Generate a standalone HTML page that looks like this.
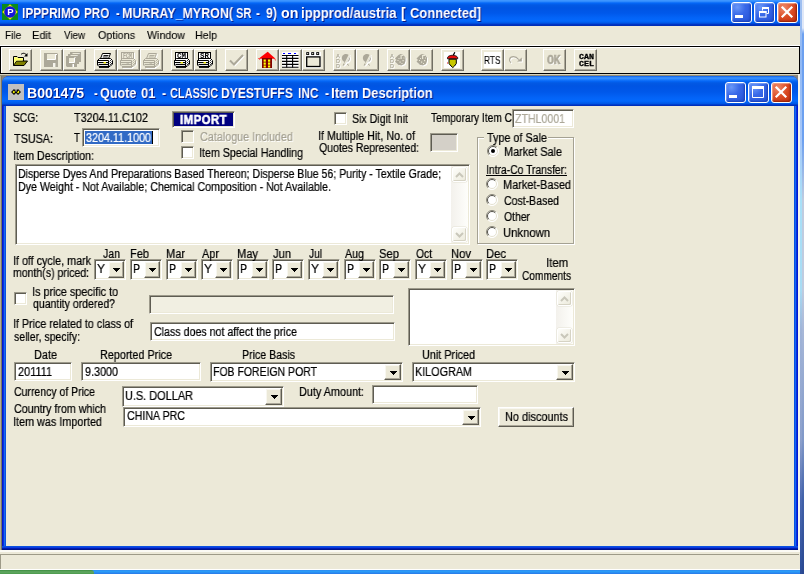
<!DOCTYPE html><html><head><meta charset="utf-8"><title>IPPPRIMO PRO</title><style>
html,body{margin:0;padding:0}
body{width:804px;height:574px;overflow:hidden;background:#ECE9D8;position:relative;font-family:"Liberation Sans",sans-serif;}
.a{position:absolute;box-sizing:content-box}
.t{will-change:transform;-webkit-text-stroke:0.22px currentColor;position:absolute;white-space:nowrap;transform-origin:0 0;color:#000;font-size:12.5px}
.mono{font-family:"Liberation Mono",monospace}
.sk{border:1px solid;border-color:#9D9A8B #fff #fff #9D9A8B;box-shadow:inset 1px 1px 0 #5E5C52, inset -1px -1px 0 #ECE9D8}
.rb{border:1px solid;border-color:#fff #5E5C52 #5E5C52 #fff;background:#ECE9D8;box-shadow:inset -1px -1px 0 #ACA899, inset 1px 1px 0 #F8F7F0}
.tb{width:21px;height:20px;border:1px solid;border-color:#fff #716F64 #716F64 #fff;background:#ECE9D8;box-shadow:inset -1px -1px 0 #ACA899}
.rd{width:12px;height:12px;border-radius:6px;background:#fff;box-shadow:inset 1px 1px 0 0.5px #8A887B, inset 2px 2px 1px #55534A, 0.5px 0.5px 0 0.5px #fff}
.sbb{border:1px solid #fff;border-radius:2px;background:linear-gradient(135deg,#FDFDFA,#ECEADB);box-shadow:inset -1px -1px 0 #D6D3C4, 0 0 0 0.5px #E4E1D3}
.cb{width:19px;height:19px;border:1px solid #fff;border-radius:3px;background:radial-gradient(circle at 28% 22%,#6A98F8 0%,#3868E8 40%,#2450D4 100%);box-shadow:inset -1px -1px 2px #1840B8, inset 1px 1px 1px #7FA4F8}
.cb.red{background:radial-gradient(circle at 30% 25%,#EE8A6A 0%,#DA4A22 50%,#C03010 100%);box-shadow:inset -1px -1px 2px #902008, inset 1px 1px 1px #F4A890}
</style></head><body>
<div class="a" style="left:800px;top:0;width:2px;height:574px;background:linear-gradient(180deg,#A0C0F0 0px,#90B8F4 60px,#A8C8F8 140px,#A8E0F8 200px,#A8DCF4 290px,#A0B4D8 330px,#8CA0CC 440px,#4A68B0 500px,#2A4C98 574px)"></div>
<div class="a" style="left:802px;top:0;width:2px;height:574px;background:linear-gradient(180deg,#E0E8F8 0px,#E0E8F8 28px,#6CA0F0 34px,#6CA0F0 140px,#C0CCE0 200px,#C0CCE0 290px,#A8B8D8 330px,#8098C8 440px,#4060A8 500px,#2A4890 574px)"></div>
<div class="a" style="left:0;top:0;width:800px;height:26px;background:linear-gradient(180deg,#3D95FF 0px,#3D95FF 1px,#0568F8 3px,#0259E4 5px,#0054E3 8px,#0058EA 13px,#0364F8 18px,#0368FC 21px,#0058E6 23px,#0034C4 24.5px,#002CB0 26px)"></div>
<svg class="a" style="left:2px;top:4px;will-change:transform" width="16" height="16"><rect width="16" height="16" fill="#0A8A1E"/><path d="M8 0.300L15.700 8L8 15.700L0.300 8Z" fill="#F4E800"/><circle cx="8" cy="8" r="5.800" fill="#1414DC"/><text x="8.300" y="11.300" font-size="9.500" font-weight="bold" font-family="Liberation Sans,sans-serif" text-anchor="middle" fill="#fff">P</text></svg>
<div class="a cb" style="left:731px;top:2px"><svg class="a" style="left:-1px;top:-1px" width="21" height="21"><rect x="4" y="13" width="8" height="3" fill="#fff"/></svg></div><div class="a cb" style="left:754px;top:2px"><svg class="a" style="left:-1px;top:-1px" width="21" height="21"><path d="M8.500 8.500V5.500H14.500V11.500H12.500" fill="none" stroke="#fff"/><path d="M8 6H15" stroke="#fff" stroke-width="2"/><rect x="5.500" y="9.500" width="6.500" height="5.500" fill="none" stroke="#fff"/><path d="M5 10H12.500" stroke="#fff" stroke-width="2"/></svg></div><div class="a cb red" style="left:777px;top:2px"><svg class="a" style="left:-1px;top:-1px" width="21" height="21"><path d="M5.500 5.500L14.500 14.500M14.500 5.500L5.500 14.500" stroke="#fff" stroke-width="2.200" stroke-linecap="square"/></svg></div>
<div class="a" style="left:0;top:26px;width:800px;height:19px;background:#ECE9D8"></div>
<div class="a" style="left:0;top:45px;width:800px;height:1px;background:#fff"></div>
<div class="a" style="left:0;top:46px;width:798px;height:26px;border:1px solid #000;background:#ECE9D8;box-shadow:inset 1px 1px 0 #fff"></div>
<div class="a tb" style="left:9px;top:49px"></div>
<div class="a tb" style="left:40px;top:49px"></div>
<div class="a tb" style="left:63px;top:49px"></div>
<div class="a tb" style="left:94px;top:49px"></div>
<div class="a tb" style="left:117px;top:49px"></div>
<div class="a tb" style="left:140px;top:49px"></div>
<div class="a tb" style="left:171px;top:49px"></div>
<div class="a tb" style="left:194px;top:49px"></div>
<div class="a tb" style="left:225px;top:49px"></div>
<div class="a tb" style="left:256px;top:49px"></div>
<div class="a tb" style="left:279px;top:49px"></div>
<div class="a tb" style="left:302px;top:49px"></div>
<div class="a tb" style="left:333px;top:49px"></div>
<div class="a tb" style="left:356px;top:49px"></div>
<div class="a tb" style="left:387px;top:49px"></div>
<div class="a tb" style="left:410px;top:49px"></div>
<div class="a tb" style="left:441px;top:49px"></div>
<div class="a tb" style="left:481px;top:49px"></div>
<div class="a tb" style="left:504px;top:49px"></div>
<div class="a tb" style="left:543px;top:49px"></div>
<div class="a tb" style="left:574px;top:49px"></div>
<svg class="a" style="left:13px;top:52px;overflow:visible;will-change:transform" width="18" height="18"><path d="M0.500 13.500V4.500H4L5 5.500H10.500V9" fill="#FFFF9A" stroke="#000"/><path d="M0.500 13.500L3.500 9H14.500L11 13.500Z" fill="#808000" stroke="#000"/><path d="M1.500 12V5.500H3.500L4.500 6.500H9.500V8.500H3Z" fill="#FFFF66"/><path d="M8 2.500C9.500 0.800 12 0.800 13.500 3" fill="none" stroke="#000"/><path d="M14.500 1V4.500H11Z" fill="#000"/></svg>
<svg class="a" style="left:44px;top:52px;overflow:visible;will-change:transform" width="18" height="18"><path d="M0 1H13L14 2V15H0Z" fill="#ACA899"/><rect x="3" y="2" width="8" height="5.500" fill="#ECE9D8"/><path d="M3 7.500H11.500V2" fill="none" stroke="#fff"/><rect x="9" y="11" width="2.400" height="4" fill="#F6F4EC"/><rect x="12" y="2" width="1" height="1" fill="#fff"/></svg>
<svg class="a" style="left:66px;top:52px;overflow:visible;will-change:transform" width="18" height="18"><path d="M4 0H15V10H13V12H11V15H1L0 14V4H2V2H4Z" fill="#ACA899"/><rect x="3" y="6" width="5" height="4" fill="#ECE9D8"/><path d="M3 10.500H8.500V6" fill="none" stroke="#fff"/><path d="M6.500 1.500H12.500M4.500 3.500H10.500" stroke="#ECE9D8"/><rect x="12.500" y="1" width="1" height="1" fill="#fff"/><rect x="10.500" y="3" width="1" height="1" fill="#fff"/><rect x="8.500" y="5" width="1" height="1" fill="#fff"/><rect x="6.500" y="12" width="1.500" height="3" fill="#fff"/></svg>
<svg class="a" style="left:97px;top:52px;overflow:visible;will-change:transform" width="18" height="18"><path d="M3.500 6.500L5.500 1.500H13.500L11.500 6.500Z" fill="#fff" stroke="#000"/><path d="M6.500 3.500H11.500M5.800 5H10.800" stroke="#000" stroke-width="0.900"/><path d="M0.500 8.500L2.500 6.500H13.500L15.500 8.500V12L13 14.500H2L0.500 13Z" fill="#fff" stroke="#000"/><path d="M1 10.500H11.500" stroke="#000" stroke-width="1"/><path d="M1.500 12.500H11.500" stroke="#000" stroke-width="1.200"/><path d="M11.500 8.500V14M11.500 8.500H0.500" stroke="#000" fill="none"/><path d="M12.500 9.500L14.500 7.500M12.500 11.500L14.500 9.500M12.500 13.500L15 11" stroke="#000" stroke-width="0.800"/><rect x="6.500" y="10" width="2.500" height="1.500" fill="#E8E000"/><path d="M2 15.200H12" stroke="#000" stroke-width="1.400"/></svg>
<svg class="a" style="left:120px;top:52px;overflow:visible;will-change:transform" width="18" height="18"><g transform="translate(1,1)"><rect x="1.500" y="0.500" width="12" height="6.500" fill="none" stroke="#fff"/><text x="7.500" y="6" font-size="6.500" font-weight="bold" font-family="Liberation Mono,monospace" text-anchor="middle" fill="#fff" textLength="9" lengthAdjust="spacingAndGlyphs">FCM</text><path d="M0.500 8.500L2.500 6.500H13.500L15.500 8.500V12L13 14.500H2L0.500 13Z" fill="none" stroke="#fff"/><path d="M1 10.500H11.500" stroke="#fff" stroke-width="1"/><path d="M1.500 12.500H11.500" stroke="#fff" stroke-width="1.200"/><path d="M11.500 8.500V14M11.500 8.500H0.500" stroke="#fff" fill="none"/><path d="M12.500 9.500L14.500 7.500M12.500 11.500L14.500 9.500M12.500 13.500L15 11" stroke="#fff" stroke-width="0.800"/><rect x="6.500" y="10" width="2.500" height="1.500" fill="none"/><path d="M2 15.200H12" stroke="#fff" stroke-width="1.400"/></g><rect x="1.500" y="0.500" width="12" height="6.500" fill="#ECE9D8" stroke="#ACA899"/><text x="7.500" y="6" font-size="6.500" font-weight="bold" font-family="Liberation Mono,monospace" text-anchor="middle" fill="#ACA899" textLength="9" lengthAdjust="spacingAndGlyphs">FCM</text><path d="M0.500 8.500L2.500 6.500H13.500L15.500 8.500V12L13 14.500H2L0.500 13Z" fill="#ECE9D8" stroke="#ACA899"/><path d="M1 10.500H11.500" stroke="#ACA899" stroke-width="1"/><path d="M1.500 12.500H11.500" stroke="#ACA899" stroke-width="1.200"/><path d="M11.500 8.500V14M11.500 8.500H0.500" stroke="#ACA899" fill="none"/><path d="M12.500 9.500L14.500 7.500M12.500 11.500L14.500 9.500M12.500 13.500L15 11" stroke="#ACA899" stroke-width="0.800"/><rect x="6.500" y="10" width="2.500" height="1.500" fill="#ACA899"/><path d="M2 15.200H12" stroke="#ACA899" stroke-width="1.400"/></svg>
<svg class="a" style="left:143px;top:52px;overflow:visible;will-change:transform" width="18" height="18"><g transform="translate(1,1)"><path d="M3.500 6.500L5.500 1.500H13.500L11.500 6.500Z" fill="none" stroke="#fff"/><path d="M6.500 3.500H11.500M5.800 5H10.800" stroke="#fff" stroke-width="0.900"/><path d="M0.500 8.500L2.500 6.500H13.500L15.500 8.500V12L13 14.500H2L0.500 13Z" fill="none" stroke="#fff"/><path d="M1 10.500H11.500" stroke="#fff" stroke-width="1"/><path d="M1.500 12.500H11.500" stroke="#fff" stroke-width="1.200"/><path d="M11.500 8.500V14M11.500 8.500H0.500" stroke="#fff" fill="none"/><path d="M12.500 9.500L14.500 7.500M12.500 11.500L14.500 9.500M12.500 13.500L15 11" stroke="#fff" stroke-width="0.800"/><rect x="6.500" y="10" width="2.500" height="1.500" fill="none"/><path d="M2 15.200H12" stroke="#fff" stroke-width="1.400"/></g><path d="M3.500 6.500L5.500 1.500H13.500L11.500 6.500Z" fill="#ECE9D8" stroke="#ACA899"/><path d="M6.500 3.500H11.500M5.800 5H10.800" stroke="#ACA899" stroke-width="0.900"/><path d="M0.500 8.500L2.500 6.500H13.500L15.500 8.500V12L13 14.500H2L0.500 13Z" fill="#ECE9D8" stroke="#ACA899"/><path d="M1 10.500H11.500" stroke="#ACA899" stroke-width="1"/><path d="M1.500 12.500H11.500" stroke="#ACA899" stroke-width="1.200"/><path d="M11.500 8.500V14M11.500 8.500H0.500" stroke="#ACA899" fill="none"/><path d="M12.500 9.500L14.500 7.500M12.500 11.500L14.500 9.500M12.500 13.500L15 11" stroke="#ACA899" stroke-width="0.800"/><rect x="6.500" y="10" width="2.500" height="1.500" fill="#ACA899"/><path d="M2 15.200H12" stroke="#ACA899" stroke-width="1.400"/></svg>
<svg class="a" style="left:174px;top:52px;overflow:visible;will-change:transform" width="18" height="18"><rect x="1.500" y="0.500" width="12" height="6.500" fill="#fff" stroke="#000"/><text x="7.500" y="6" font-size="6.500" font-weight="bold" font-family="Liberation Mono,monospace" text-anchor="middle" fill="#000" textLength="9" lengthAdjust="spacingAndGlyphs">CM</text><path d="M0.500 8.500L2.500 6.500H13.500L15.500 8.500V12L13 14.500H2L0.500 13Z" fill="#fff" stroke="#000"/><path d="M1 10.500H11.500" stroke="#000" stroke-width="1"/><path d="M1.500 12.500H11.500" stroke="#000" stroke-width="1.200"/><path d="M11.500 8.500V14M11.500 8.500H0.500" stroke="#000" fill="none"/><path d="M12.500 9.500L14.500 7.500M12.500 11.500L14.500 9.500M12.500 13.500L15 11" stroke="#000" stroke-width="0.800"/><rect x="6.500" y="10" width="2.500" height="1.500" fill="#E8E000"/><path d="M2 15.200H12" stroke="#000" stroke-width="1.400"/></svg>
<svg class="a" style="left:197px;top:52px;overflow:visible;will-change:transform" width="18" height="18"><rect x="1.500" y="0.500" width="12" height="6.500" fill="#fff" stroke="#000"/><text x="7.500" y="6" font-size="6.500" font-weight="bold" font-family="Liberation Mono,monospace" text-anchor="middle" fill="#000" textLength="9" lengthAdjust="spacingAndGlyphs">SR</text><path d="M0.500 8.500L2.500 6.500H13.500L15.500 8.500V12L13 14.500H2L0.500 13Z" fill="#fff" stroke="#000"/><path d="M1 10.500H11.500" stroke="#000" stroke-width="1"/><path d="M1.500 12.500H11.500" stroke="#000" stroke-width="1.200"/><path d="M11.500 8.500V14M11.500 8.500H0.500" stroke="#000" fill="none"/><path d="M12.500 9.500L14.500 7.500M12.500 11.500L14.500 9.500M12.500 13.500L15 11" stroke="#000" stroke-width="0.800"/><rect x="6.500" y="10" width="2.500" height="1.500" fill="#E8E000"/><path d="M2 15.200H12" stroke="#000" stroke-width="1.400"/></svg>
<svg class="a" style="left:229px;top:52px;overflow:visible;will-change:transform" width="18" height="18"><path d="M2 9.500L6 13.500L15 4" fill="none" stroke="#fff" stroke-width="1.800"/><path d="M1 8.500L5 12.500L14 3" fill="none" stroke="#ACA899" stroke-width="2"/></svg>
<svg class="a" style="left:260px;top:52px;overflow:visible;will-change:transform" width="18" height="18"><path d="M7.700 -0.300L-1.500 6.800H15.500Z" fill="#FF0000"/><path d="M-1.500 6.500L-0.500 7.500M14.500 7L15.800 8.200" stroke="#FF0000" stroke-width="1"/><rect x="2" y="6" width="10" height="10" fill="#800000"/><g fill="#FFFF00"><rect x="3.600" y="7.500" width="2.200" height="2.200"/><rect x="8" y="7.500" width="2.200" height="2.200"/><rect x="3.600" y="10.500" width="2.200" height="2.200"/><rect x="8" y="10.500" width="2.200" height="2.200"/><rect x="3.600" y="13.500" width="2.200" height="2"/><rect x="8" y="13.500" width="2.200" height="2"/></g></svg>
<svg class="a" style="left:283px;top:52px;overflow:visible;will-change:transform" width="18" height="18"><rect x="-1" y="0" width="16.500" height="16" fill="#fff"/><path d="M0 1.500H2M5 1.500H8M11 1.500H13" stroke="#0000FF" stroke-width="1.200"/><path d="M-1 3.500H15.500M-1 6.400H15.500M-1 9.400H15.500M-1 12.400H15.500M-1 15.300H15.500" stroke="#000" stroke-width="1.100"/><path d="M3.700 3.500V15.500M9.600 3.500V15.500" stroke="#000" stroke-width="1.100"/></svg>
<svg class="a" style="left:306px;top:52px;overflow:visible;will-change:transform" width="18" height="18"><rect x="-0.500" y="0" width="15.500" height="16" fill="#fff"/><g fill="#ECE9D8" stroke="#000" stroke-width="0.900"><rect x="0.700" y="0.600" width="2" height="2"/><rect x="5.700" y="0.600" width="2" height="2"/><rect x="10.700" y="0.600" width="2" height="2"/></g><rect x="0.700" y="4.900" width="13.300" height="9.600" fill="#ECE9D8" stroke="#000" stroke-width="1.300"/></svg>
<svg class="a" style="left:336px;top:52px;overflow:visible;will-change:transform" width="18" height="18"><g transform="translate(1,1)"><text font-size="5.500" font-weight="bold" font-family="Liberation Sans,sans-serif" fill="#fff"><tspan x="0" y="5.500">A</tspan><tspan x="0" y="10.500">D</tspan><tspan x="0" y="15.500">D</tspan></text><path d="M10 2C7 2 5.5 4.500 6 7C6.3 8.500 7.5 9.500 8.5 10L6.5 13.500H8L10.5 10.500C13 10 14.5 7.500 14 5C13.5 3 12 2 10 2Z" fill="#fff"/></g><text font-size="5.500" font-weight="bold" font-family="Liberation Sans,sans-serif" fill="#ACA899"><tspan x="0" y="5.500">A</tspan><tspan x="0" y="10.500">D</tspan><tspan x="0" y="15.500">D</tspan></text><path d="M10 2C7 2 5.5 4.500 6 7C6.3 8.500 7.5 9.500 8.5 10L6.5 13.500H8L10.5 10.500C13 10 14.5 7.500 14 5C13.5 3 12 2 10 2Z" fill="#ACA899"/><path d="M13.5 2.500L8.5 12.500" stroke="#ECE9D8" stroke-width="1.400"/><path d="M14.5 3L9.5 13" stroke="#fff" stroke-width="0.800"/><path d="M11 12L13 13.500" stroke="#ACA899" stroke-width="1"/></svg>
<svg class="a" style="left:359px;top:52px;overflow:visible;will-change:transform" width="18" height="18"><g transform="translate(1,1)"><path d="M8 2C5 2 3.5 4.500 4 7C4.3 8.500 5.5 9.500 6.5 10L4.5 13.500H6L8.5 10.500C11 10 12.5 7.500 12 5C11.5 3 10 2 8 2Z" fill="#fff"/></g><path d="M8 2C5 2 3.5 4.500 4 7C4.3 8.500 5.5 9.500 6.5 10L4.5 13.500H6L8.5 10.500C11 10 12.5 7.500 12 5C11.5 3 10 2 8 2Z" fill="#ACA899"/><path d="M11.5 2.500L6.5 12.500" stroke="#ECE9D8" stroke-width="1.400"/><path d="M12.5 3L7.5 13" stroke="#fff" stroke-width="0.800"/><path d="M9 12L11 13.500" stroke="#ACA899" stroke-width="1"/></svg>
<svg class="a" style="left:390px;top:52px;overflow:visible;will-change:transform" width="18" height="18"><g transform="translate(1,1)"><text font-size="5.500" font-weight="bold" font-family="Liberation Sans,sans-serif" fill="#fff"><tspan x="0" y="5.500">A</tspan><tspan x="0" y="10.500">D</tspan><tspan x="0" y="15.500">D</tspan></text><path d="M10.5 2L13.5 3L15.5 5.500V9L14.5 12L11.5 13.500L8.5 13L6.5 11L5.0 9.500L6.5 8L5.0 6.500L7.0 4.500L8.5 3Z" fill="#fff"/></g><text font-size="5.500" font-weight="bold" font-family="Liberation Sans,sans-serif" fill="#ACA899"><tspan x="0" y="5.500">A</tspan><tspan x="0" y="10.500">D</tspan><tspan x="0" y="15.500">D</tspan></text><path d="M10.5 2L13.5 3L15.5 5.500V9L14.5 12L11.5 13.500L8.5 13L6.5 11L5.0 9.500L6.5 8L5.0 6.500L7.0 4.500L8.5 3Z" fill="#ACA899"/><g fill="#ECE9D8"><rect x="10.5" y="3" width="1.200" height="4"/><rect x="11.5" y="3" width="2" height="1"/><rect x="8.5" y="6" width="1" height="1"/><rect x="12.5" y="8" width="1.200" height="1.200"/><rect x="9.5" y="9.500" width="1.200" height="1.200"/><rect x="11.5" y="11" width="1" height="1"/><rect x="7.5" y="8" width="1" height="1"/><rect x="13.5" y="5.500" width="1" height="1"/></g></svg>
<svg class="a" style="left:414px;top:52px;overflow:visible;will-change:transform" width="18" height="18"><g transform="translate(1,1)"><path d="M8 2L11 3L13 5.500V9L12 12L9 13.500L6 13L4 11L2.5 9.500L4 8L2.5 6.500L4.5 4.500L6 3Z" fill="#fff"/></g><path d="M8 2L11 3L13 5.500V9L12 12L9 13.500L6 13L4 11L2.5 9.500L4 8L2.5 6.500L4.5 4.500L6 3Z" fill="#ACA899"/><g fill="#ECE9D8"><rect x="8" y="3" width="1.200" height="4"/><rect x="9" y="3" width="2" height="1"/><rect x="6" y="6" width="1" height="1"/><rect x="10" y="8" width="1.200" height="1.200"/><rect x="7" y="9.500" width="1.200" height="1.200"/><rect x="9" y="11" width="1" height="1"/><rect x="5" y="8" width="1" height="1"/><rect x="11" y="5.500" width="1" height="1"/></g></svg>
<svg class="a" style="left:445px;top:52px;overflow:visible;will-change:transform" width="18" height="18"><rect x="-1" y="0" width="16" height="16" fill="#fff"/><path d="M9.800 0.300L8.300 3.200" stroke="#000" stroke-width="1.300"/><path d="M2.500 6.800C2 4.500 4.500 3.300 7.500 3.300C10.500 3.300 13.200 4.500 12.700 6.800Z" fill="#E81010" stroke="#000" stroke-width="0.800"/><path d="M4 7.200H11.300V11.500L9.500 14L7.800 15.600L6 14L4 11.500Z" fill="#C8C800" stroke="#000" stroke-width="1"/><rect x="2" y="10.500" width="1" height="1" fill="#E81010"/></svg>
<div class="a" style="left:484px;top:52px;width:16.500px;height:16px;background:#fff"></div><span class="t" style="left:484.300px;top:54.300px;font-size:10.800px;line-height:12px;transform:scaleX(0.77);-webkit-text-stroke:0.15px #000">RTS</span>
<svg class="a" style="left:508px;top:52px;overflow:visible;will-change:transform" width="18" height="18"><g transform="translate(1,1)"><path d="M3 10.800C0.500 9 1 4.600 5.500 4.600C8 4.600 9.500 6 10.800 7.600" fill="none" stroke="#fff" stroke-width="1.100"/><path d="M9 9.500L13.800 5.400V9.500Z" fill="#fff"/></g><path d="M3 10.800C0.500 9 1 4.600 5.500 4.600C8 4.600 9.500 6 10.800 7.600" fill="none" stroke="#ACA899" stroke-width="1.100"/><path d="M9 9.500L13.800 5.400V9.500Z" fill="#ACA899"/></svg>
<span class="t mono" style="left:547px;top:52.500px;font-size:13.500px;line-height:15px;font-weight:bold;color:#ACA899;transform:scaleX(0.86);text-shadow:1px 1px 0 #fff;letter-spacing:-0.5px;-webkit-text-stroke:0.4px #ACA899">OK</span>
<span class="t mono" style="left:578.500px;top:53.500px;font-size:7.800px;line-height:7px;font-weight:bold;white-space:pre;transform:scaleX(1.07);-webkit-text-stroke:0.3px #000">CAN
CEL</span>
<div class="a" style="left:0;top:74px;width:800px;height:1px;background:#D6D2BE"></div>
<div class="a" style="left:0;top:75px;width:800px;height:1px;background:#8E8A76"></div>
<div class="a" style="left:0;top:76px;width:1px;height:474px;background:#B0AC98"></div>
<div class="a" style="left:1px;top:76px;width:1px;height:474px;background:#7C7660"></div>
<div class="a" style="left:2px;top:76px;width:8px;height:8px;background:#808080"></div>
<div class="a" style="left:790px;top:76px;width:8px;height:8px;background:#808080"></div>
<div class="a" style="left:798px;top:74px;width:2px;height:476px;background:#F6F4EA"></div>
<div class="a" style="left:2px;top:76px;width:796px;height:474px;border-radius:7px 7px 0 0;background:#0831D9"></div>
<div class="a" style="left:2px;top:100px;width:4px;height:450px;background:linear-gradient(90deg,#0019CF 0,#0019CF 1px,#0A2FE0 1px,#0A2FE0 2px,#166AEE 2px,#166AEE 3px,#0A50E0 3px)"></div>
<div class="a" style="left:794px;top:100px;width:4px;height:450px;background:linear-gradient(90deg,#0A50E0 0,#0A50E0 1px,#1468F0 1px,#1468F0 2px,#0A2FE0 2px,#0A2FE0 3px,#0019CF 3px)"></div>
<div class="a" style="left:2px;top:546px;width:796px;height:4px;background:linear-gradient(180deg,#0A50E0 0,#0A50E0 1px,#0A3CE0 1px,#0A3CE0 2px,#001CB4 2px,#001CB4 3px,#00138C 3px)"></div>
<div class="a" style="left:2px;top:76px;width:796px;height:30px;border-radius:7px 7px 0 0;background:linear-gradient(180deg,#0A5FEA 0px,#3D95FF 2px,#0568F8 5px,#0259E4 7px,#0054E3 10px,#0058EA 16px,#0364F8 22px,#0368FC 25px,#0058E6 27.5px,#0034C4 29px,#002CB0 30px)"></div>
<div class="a" style="left:6px;top:106px;width:788px;height:440px;background:#ECE9D8"></div>
<svg class="a" style="left:8px;top:84px" width="16" height="16"><rect width="16" height="16" fill="#C0C0C0"/><path d="M3 8L6 5L8 7L10 5L13 8L10 11L8 9L6 11Z" fill="#000"/><path d="M4.500 8L6 6.500L7 8L6 9.500ZM9 8.500L10.500 6.500L11.500 8L10 9.500Z" fill="#FFFF00"/><rect x="7.500" y="5" width="1" height="3" fill="#808080"/></svg>
<div class="a cb" style="left:725px;top:82px"><svg class="a" style="left:-1px;top:-1px" width="21" height="21"><rect x="4" y="13" width="8" height="3" fill="#fff"/></svg></div><div class="a cb" style="left:748px;top:82px"><svg class="a" style="left:-1px;top:-1px" width="21" height="21"><path d="M4.500 5.500H15.500V15.500H4.500Z" fill="none" stroke="#fff" stroke-width="1"/><rect x="4" y="4" width="12" height="3" fill="#fff"/></svg></div><div class="a cb red" style="left:771px;top:82px"><svg class="a" style="left:-1px;top:-1px" width="21" height="21"><path d="M5.500 5.500L14.500 14.500M14.500 5.500L5.500 14.500" stroke="#fff" stroke-width="2.200" stroke-linecap="square"/></svg></div>
<div class="a" style="left:0;top:550px;width:800px;height:2px;background:#FBFAF4"></div>
<div class="a" style="left:0;top:552px;width:800px;height:2px;background:#ECE9D8"></div>
<div class="a" style="left:0;top:554px;width:799px;height:1px;background:#9D9A88"></div>
<div class="a" style="left:0;top:555px;width:1px;height:14px;background:#9D9A88"></div>
<div class="a" style="left:0;top:569px;width:800px;height:1px;background:#fff"></div>
<div class="a" style="left:0;top:570px;width:800px;height:4px;background:linear-gradient(180deg,#2C8CF0,#2A9CF8 40%,#2878E8)"></div>
<div class="a" style="left:0;top:570px;width:94px;height:4px;background:linear-gradient(180deg,#3C8C40,#62A862 50%,#4A9A4C);border-radius:0 3px 0 0"></div>
<div class="a sk" style="left:172px;top:111px;width:61px;height:15px;background:#000080;"></div>
<div class="a sk" style="left:181px;top:130px;width:11px;height:11px;background:#ECE9D8;"></div>
<div class="a sk" style="left:181px;top:146px;width:11px;height:11px;background:#fff;"></div>
<div class="a sk" style="left:334px;top:112px;width:11px;height:11px;background:#fff;"></div>
<div class="a sk" style="left:14px;top:292px;width:11px;height:11px;background:#fff;"></div>
<div class="a sk" style="left:82px;top:128px;width:76px;height:17px;background:#fff;"></div>
<div class="a" style="left:85px;top:131px;width:67px;height:13px;background:#316AC5"></div>
<div class="a" style="left:152px;top:131px;width:1px;height:13px;background:#000"></div>
<div class="a sk" style="left:512px;top:109px;width:60px;height:17px;background:#fff;"></div>
<div class="a sk" style="left:430px;top:133px;width:26px;height:17px;background:#D4D0C8;"></div>
<div class="a sk" style="left:15px;top:164px;width:453px;height:79px;background:#fff;"></div>
<div class="a" style="left:451px;top:166px;width:17px;height:77px;background:linear-gradient(90deg,#F3F1EC,#FEFEFB)"></div><div class="a sbb" style="left:452px;top:167px;width:13px;height:13px"><svg class="a" style="left:2.0px;top:3.5px" width="9" height="6"><path d="M1 5L4.5 1.5L8 5" fill="none" stroke="#C9C7BA" stroke-width="2"/></svg></div><div class="a sbb" style="left:452px;top:227px;width:13px;height:13px"><svg class="a" style="left:2.0px;top:3.5px" width="9" height="6"><path d="M1 1L4.5 4.5L8 1" fill="none" stroke="#C9C7BA" stroke-width="2"/></svg></div>
<div class="a" style="left:477px;top:137px;width:95px;height:105px;border:1px solid #A5A293;box-shadow:1px 1px 0 #fff, inset 1px 1px 0 #fff"></div>
<div class="a" style="left:484px;top:136px;width:64px;height:4px;background:#ECE9D8"></div>
<svg class="a" style="left:487px;top:145px" width="12" height="12"><circle cx="6" cy="6" r="5.500" fill="#fff"/><path d="M2.100 9.900A5.500 5.500 0 0 1 9.900 2.100" fill="none" stroke="#8A887B" stroke-width="1"/><path d="M2.800 9.200A4.500 4.500 0 0 1 9.200 2.800" fill="none" stroke="#55534A" stroke-width="1"/><path d="M9.900 2.100A5.500 5.500 0 0 1 2.100 9.900" fill="none" stroke="#fff" stroke-width="1"/><path d="M9.200 2.800A4.500 4.500 0 0 1 2.800 9.200" fill="none" stroke="#E4E1D0" stroke-width="1"/><circle cx="6" cy="6" r="2" fill="#000"/></svg>
<svg class="a" style="left:486px;top:178px" width="12" height="12"><circle cx="6" cy="6" r="5.500" fill="#fff"/><path d="M2.100 9.900A5.500 5.500 0 0 1 9.900 2.100" fill="none" stroke="#8A887B" stroke-width="1"/><path d="M2.800 9.200A4.500 4.500 0 0 1 9.200 2.800" fill="none" stroke="#55534A" stroke-width="1"/><path d="M9.900 2.100A5.500 5.500 0 0 1 2.100 9.900" fill="none" stroke="#fff" stroke-width="1"/><path d="M9.200 2.800A4.500 4.500 0 0 1 2.800 9.200" fill="none" stroke="#E4E1D0" stroke-width="1"/></svg>
<svg class="a" style="left:486px;top:194px" width="12" height="12"><circle cx="6" cy="6" r="5.500" fill="#fff"/><path d="M2.100 9.900A5.500 5.500 0 0 1 9.900 2.100" fill="none" stroke="#8A887B" stroke-width="1"/><path d="M2.800 9.200A4.500 4.500 0 0 1 9.200 2.800" fill="none" stroke="#55534A" stroke-width="1"/><path d="M9.900 2.100A5.500 5.500 0 0 1 2.100 9.900" fill="none" stroke="#fff" stroke-width="1"/><path d="M9.200 2.800A4.500 4.500 0 0 1 2.800 9.200" fill="none" stroke="#E4E1D0" stroke-width="1"/></svg>
<svg class="a" style="left:486px;top:210px" width="12" height="12"><circle cx="6" cy="6" r="5.500" fill="#fff"/><path d="M2.100 9.900A5.500 5.500 0 0 1 9.900 2.100" fill="none" stroke="#8A887B" stroke-width="1"/><path d="M2.800 9.200A4.500 4.500 0 0 1 9.200 2.800" fill="none" stroke="#55534A" stroke-width="1"/><path d="M9.900 2.100A5.500 5.500 0 0 1 2.100 9.900" fill="none" stroke="#fff" stroke-width="1"/><path d="M9.200 2.800A4.500 4.500 0 0 1 2.800 9.200" fill="none" stroke="#E4E1D0" stroke-width="1"/></svg>
<svg class="a" style="left:486px;top:226px" width="12" height="12"><circle cx="6" cy="6" r="5.500" fill="#fff"/><path d="M2.100 9.900A5.500 5.500 0 0 1 9.900 2.100" fill="none" stroke="#8A887B" stroke-width="1"/><path d="M2.800 9.200A4.500 4.500 0 0 1 9.200 2.800" fill="none" stroke="#55534A" stroke-width="1"/><path d="M9.900 2.100A5.500 5.500 0 0 1 2.100 9.900" fill="none" stroke="#fff" stroke-width="1"/><path d="M9.200 2.800A4.500 4.500 0 0 1 2.800 9.200" fill="none" stroke="#E4E1D0" stroke-width="1"/></svg>
<div class="a sk" style="left:94px;top:259px;width:30px;height:19px;background:#fff;"></div><div class="a rb" style="left:108px;top:261px;width:14px;height:15px"><svg class="a" style="left:4px;top:6px" width="7" height="4" shape-rendering="crispEdges"><path d="M0 0h7v1h-7zM1 1h5v1h-5zM2 2h3v1h-3zM3 3h1v1h-1z" fill="#000"/></svg></div>
<div class="a sk" style="left:130px;top:259px;width:30px;height:19px;background:#fff;"></div><div class="a rb" style="left:144px;top:261px;width:14px;height:15px"><svg class="a" style="left:4px;top:6px" width="7" height="4" shape-rendering="crispEdges"><path d="M0 0h7v1h-7zM1 1h5v1h-5zM2 2h3v1h-3zM3 3h1v1h-1z" fill="#000"/></svg></div>
<div class="a sk" style="left:166px;top:259px;width:30px;height:19px;background:#fff;"></div><div class="a rb" style="left:180px;top:261px;width:14px;height:15px"><svg class="a" style="left:4px;top:6px" width="7" height="4" shape-rendering="crispEdges"><path d="M0 0h7v1h-7zM1 1h5v1h-5zM2 2h3v1h-3zM3 3h1v1h-1z" fill="#000"/></svg></div>
<div class="a sk" style="left:201px;top:259px;width:30px;height:19px;background:#fff;"></div><div class="a rb" style="left:215px;top:261px;width:14px;height:15px"><svg class="a" style="left:4px;top:6px" width="7" height="4" shape-rendering="crispEdges"><path d="M0 0h7v1h-7zM1 1h5v1h-5zM2 2h3v1h-3zM3 3h1v1h-1z" fill="#000"/></svg></div>
<div class="a sk" style="left:237px;top:259px;width:30px;height:19px;background:#fff;"></div><div class="a rb" style="left:251px;top:261px;width:14px;height:15px"><svg class="a" style="left:4px;top:6px" width="7" height="4" shape-rendering="crispEdges"><path d="M0 0h7v1h-7zM1 1h5v1h-5zM2 2h3v1h-3zM3 3h1v1h-1z" fill="#000"/></svg></div>
<div class="a sk" style="left:272px;top:259px;width:30px;height:19px;background:#fff;"></div><div class="a rb" style="left:286px;top:261px;width:14px;height:15px"><svg class="a" style="left:4px;top:6px" width="7" height="4" shape-rendering="crispEdges"><path d="M0 0h7v1h-7zM1 1h5v1h-5zM2 2h3v1h-3zM3 3h1v1h-1z" fill="#000"/></svg></div>
<div class="a sk" style="left:308px;top:259px;width:30px;height:19px;background:#fff;"></div><div class="a rb" style="left:322px;top:261px;width:14px;height:15px"><svg class="a" style="left:4px;top:6px" width="7" height="4" shape-rendering="crispEdges"><path d="M0 0h7v1h-7zM1 1h5v1h-5zM2 2h3v1h-3zM3 3h1v1h-1z" fill="#000"/></svg></div>
<div class="a sk" style="left:344px;top:259px;width:30px;height:19px;background:#fff;"></div><div class="a rb" style="left:358px;top:261px;width:14px;height:15px"><svg class="a" style="left:4px;top:6px" width="7" height="4" shape-rendering="crispEdges"><path d="M0 0h7v1h-7zM1 1h5v1h-5zM2 2h3v1h-3zM3 3h1v1h-1z" fill="#000"/></svg></div>
<div class="a sk" style="left:379px;top:259px;width:30px;height:19px;background:#fff;"></div><div class="a rb" style="left:393px;top:261px;width:14px;height:15px"><svg class="a" style="left:4px;top:6px" width="7" height="4" shape-rendering="crispEdges"><path d="M0 0h7v1h-7zM1 1h5v1h-5zM2 2h3v1h-3zM3 3h1v1h-1z" fill="#000"/></svg></div>
<div class="a sk" style="left:415px;top:259px;width:30px;height:19px;background:#fff;"></div><div class="a rb" style="left:429px;top:261px;width:14px;height:15px"><svg class="a" style="left:4px;top:6px" width="7" height="4" shape-rendering="crispEdges"><path d="M0 0h7v1h-7zM1 1h5v1h-5zM2 2h3v1h-3zM3 3h1v1h-1z" fill="#000"/></svg></div>
<div class="a sk" style="left:451px;top:259px;width:30px;height:19px;background:#fff;"></div><div class="a rb" style="left:465px;top:261px;width:14px;height:15px"><svg class="a" style="left:4px;top:6px" width="7" height="4" shape-rendering="crispEdges"><path d="M0 0h7v1h-7zM1 1h5v1h-5zM2 2h3v1h-3zM3 3h1v1h-1z" fill="#000"/></svg></div>
<div class="a sk" style="left:486px;top:259px;width:30px;height:19px;background:#fff;"></div><div class="a rb" style="left:500px;top:261px;width:14px;height:15px"><svg class="a" style="left:4px;top:6px" width="7" height="4" shape-rendering="crispEdges"><path d="M0 0h7v1h-7zM1 1h5v1h-5zM2 2h3v1h-3zM3 3h1v1h-1z" fill="#000"/></svg></div>
<div class="a sk" style="left:149px;top:295px;width:243px;height:17px;background:#F1EFE2;"></div>
<div class="a sk" style="left:150px;top:322px;width:243px;height:17px;background:#fff;"></div>
<div class="a sk" style="left:408px;top:288px;width:165px;height:56px;background:#fff;"></div>
<div class="a" style="left:556px;top:290px;width:17px;height:54px;background:linear-gradient(90deg,#F3F1EC,#FEFEFB)"></div><div class="a sbb" style="left:557px;top:291px;width:13px;height:13px"><svg class="a" style="left:2.0px;top:3.5px" width="9" height="6"><path d="M1 5L4.5 1.5L8 5" fill="none" stroke="#C9C7BA" stroke-width="2"/></svg></div><div class="a sbb" style="left:557px;top:328px;width:13px;height:13px"><svg class="a" style="left:2.0px;top:3.5px" width="9" height="6"><path d="M1 1L4.5 4.5L8 1" fill="none" stroke="#C9C7BA" stroke-width="2"/></svg></div>
<div class="a sk" style="left:14px;top:362px;width:56px;height:17px;background:#fff;"></div>
<div class="a sk" style="left:81px;top:362px;width:118px;height:17px;background:#fff;"></div>
<div class="a sk" style="left:210px;top:362px;width:191px;height:18px;background:#fff;"></div><div class="a rb" style="left:384px;top:364px;width:15px;height:14px"><svg class="a" style="left:5px;top:6px" width="7" height="4" shape-rendering="crispEdges"><path d="M0 0h7v1h-7zM1 1h5v1h-5zM2 2h3v1h-3zM3 3h1v1h-1z" fill="#000"/></svg></div>
<div class="a sk" style="left:412px;top:362px;width:161px;height:18px;background:#fff;"></div><div class="a rb" style="left:556px;top:364px;width:15px;height:14px"><svg class="a" style="left:5px;top:6px" width="7" height="4" shape-rendering="crispEdges"><path d="M0 0h7v1h-7zM1 1h5v1h-5zM2 2h3v1h-3zM3 3h1v1h-1z" fill="#000"/></svg></div>
<div class="a sk" style="left:122px;top:386px;width:160px;height:19px;background:#fff;"></div><div class="a rb" style="left:265px;top:388px;width:15px;height:15px"><svg class="a" style="left:5px;top:6px" width="7" height="4" shape-rendering="crispEdges"><path d="M0 0h7v1h-7zM1 1h5v1h-5zM2 2h3v1h-3zM3 3h1v1h-1z" fill="#000"/></svg></div>
<div class="a sk" style="left:372px;top:385px;width:104px;height:17px;background:#fff;"></div>
<div class="a sk" style="left:123px;top:407px;width:356px;height:18px;background:#fff;"></div><div class="a rb" style="left:462px;top:409px;width:15px;height:14px"><svg class="a" style="left:5px;top:6px" width="7" height="4" shape-rendering="crispEdges"><path d="M0 0h7v1h-7zM1 1h5v1h-5zM2 2h3v1h-3zM3 3h1v1h-1z" fill="#000"/></svg></div>
<div class="a rb" style="left:498px;top:407px;width:74px;height:18px"></div>
<span id="l0" class="t" style="left:13.00px;top:110.67px;font-size:12.5px;line-height:14px;transform:scaleX(0.8242);">SCG:</span>
<span id="l1" class="t" style="left:74.00px;top:110.67px;font-size:12.5px;line-height:14px;transform:scaleX(0.8680);">T3204.11.C102</span>
<span id="l2" class="t" style="left:14.00px;top:131.67px;font-size:12.5px;line-height:14px;transform:scaleX(0.8643);">TSUSA:</span>
<span id="l3" class="t" style="left:74.00px;top:130.67px;font-size:12.5px;line-height:14px;transform:scaleX(0.7853);">T</span>
<span id="l4" class="t" style="left:13.00px;top:148.67px;font-size:12.5px;line-height:14px;transform:scaleX(0.8643);">Item Description:</span>
<span id="l5" class="t" style="left:200.00px;top:129.67px;font-size:12.5px;line-height:14px;transform:scaleX(0.8633);color:#A5A293;text-shadow:1px 1px 0 #fff;">Catalogue Included</span>
<span id="l6" class="t" style="left:199.00px;top:145.67px;font-size:12.5px;line-height:14px;transform:scaleX(0.8553);">Item Special Handling</span>
<span id="l7" class="t" style="left:352.00px;top:111.67px;font-size:12.5px;line-height:14px;transform:scaleX(0.8488);">Six Digit Init</span>
<span id="l8" class="t" style="left:431.00px;top:110.67px;font-size:12.5px;line-height:14px;transform:scaleX(0.8154);">Temporary Item C</span>
<span id="l9" class="t" style="left:318.00px;top:128.67px;font-size:12.5px;line-height:14px;transform:scaleX(0.8620);">If Multiple Hit, No. of</span>
<span id="l10" class="t" style="left:319.00px;top:140.67px;font-size:12.5px;line-height:14px;transform:scaleX(0.8416);">Quotes Represented:</span>
<span id="l11" class="t" style="left:487.00px;top:130.67px;font-size:12.5px;line-height:14px;transform:scaleX(0.8633);">Type of Sale</span>
<span id="l12" class="t" style="left:504.00px;top:144.67px;font-size:12.5px;line-height:14px;transform:scaleX(0.8698);">Market Sale</span>
<span id="l13" class="t" style="left:486.00px;top:162.67px;font-size:12.5px;line-height:14px;transform:scaleX(0.8269);text-decoration:underline;">Intra-Co Transfer:</span>
<span id="l14" class="t" style="left:503.00px;top:177.67px;font-size:12.5px;line-height:14px;transform:scaleX(0.8747);">Market-Based</span>
<span id="l15" class="t" style="left:504.00px;top:193.67px;font-size:12.5px;line-height:14px;transform:scaleX(0.8424);">Cost-Based</span>
<span id="l16" class="t" style="left:504.00px;top:209.67px;font-size:12.5px;line-height:14px;transform:scaleX(0.8316);">Other</span>
<span id="l17" class="t" style="left:503.00px;top:225.67px;font-size:12.5px;line-height:14px;transform:scaleX(0.9021);">Unknown</span>
<span id="l18" class="t" style="left:13.00px;top:253.67px;font-size:12.5px;line-height:14px;transform:scaleX(0.8595);">If off cycle, mark</span>
<span id="l19" class="t" style="left:13.00px;top:265.67px;font-size:12.5px;line-height:14px;transform:scaleX(0.8421);">month(s) priced:</span>
<span id="l20" class="t" style="left:103.00px;top:246.67px;font-size:12.5px;line-height:14px;transform:scaleX(0.8434);">Jan</span>
<span id="l21" class="t" style="left:130.00px;top:246.67px;font-size:12.5px;line-height:14px;transform:scaleX(0.8845);">Feb</span>
<span id="l22" class="t" style="left:166.00px;top:246.67px;font-size:12.5px;line-height:14px;transform:scaleX(0.8852);">Mar</span>
<span id="l23" class="t" style="left:202.00px;top:246.67px;font-size:12.5px;line-height:14px;transform:scaleX(0.8739);">Apr</span>
<span id="l24" class="t" style="left:237.00px;top:246.67px;font-size:12.5px;line-height:14px;transform:scaleX(0.8911);">May</span>
<span id="l25" class="t" style="left:273.00px;top:246.67px;font-size:12.5px;line-height:14px;transform:scaleX(0.8930);">Jun</span>
<span id="l26" class="t" style="left:309.00px;top:246.67px;font-size:12.5px;line-height:14px;transform:scaleX(0.8133);">Jul</span>
<span id="l27" class="t" style="left:345.00px;top:246.67px;font-size:12.5px;line-height:14px;transform:scaleX(0.8539);">Aug</span>
<span id="l28" class="t" style="left:379.00px;top:246.67px;font-size:12.5px;line-height:14px;transform:scaleX(0.9014);">Sep</span>
<span id="l29" class="t" style="left:416.00px;top:246.67px;font-size:12.5px;line-height:14px;transform:scaleX(0.8225);">Oct</span>
<span id="l30" class="t" style="left:451.00px;top:246.67px;font-size:12.5px;line-height:14px;transform:scaleX(0.9020);">Nov</span>
<span id="l31" class="t" style="left:486.00px;top:246.67px;font-size:12.5px;line-height:14px;transform:scaleX(0.9020);">Dec</span>
<span id="l32" class="t" style="left:97.00px;top:261.67px;font-size:12.5px;line-height:14px;transform:scaleX(0.9588);">Y</span>
<span id="l33" class="t" style="left:132.50px;top:261.67px;font-size:12.5px;line-height:14px;transform:scaleX(0.8390);">P</span>
<span id="l34" class="t" style="left:168.50px;top:261.67px;font-size:12.5px;line-height:14px;transform:scaleX(0.8390);">P</span>
<span id="l35" class="t" style="left:204.00px;top:261.67px;font-size:12.5px;line-height:14px;transform:scaleX(0.9588);">Y</span>
<span id="l36" class="t" style="left:239.50px;top:261.67px;font-size:12.5px;line-height:14px;transform:scaleX(0.8390);">P</span>
<span id="l37" class="t" style="left:274.50px;top:261.67px;font-size:12.5px;line-height:14px;transform:scaleX(0.8390);">P</span>
<span id="l38" class="t" style="left:311.00px;top:261.67px;font-size:12.5px;line-height:14px;transform:scaleX(0.9588);">Y</span>
<span id="l39" class="t" style="left:346.50px;top:261.67px;font-size:12.5px;line-height:14px;transform:scaleX(0.8390);">P</span>
<span id="l40" class="t" style="left:381.50px;top:261.67px;font-size:12.5px;line-height:14px;transform:scaleX(0.8390);">P</span>
<span id="l41" class="t" style="left:418.00px;top:261.67px;font-size:12.5px;line-height:14px;transform:scaleX(0.9588);">Y</span>
<span id="l42" class="t" style="left:453.50px;top:261.67px;font-size:12.5px;line-height:14px;transform:scaleX(0.8390);">P</span>
<span id="l43" class="t" style="left:488.50px;top:261.67px;font-size:12.5px;line-height:14px;transform:scaleX(0.8390);">P</span>
<span id="l44" class="t" style="left:546.00px;top:255.67px;font-size:12.5px;line-height:14px;transform:scaleX(0.9069);">Item</span>
<span id="l45" class="t" style="left:522.00px;top:268.67px;font-size:12.5px;line-height:14px;transform:scaleX(0.8108);">Comments</span>
<span id="l46" class="t" style="left:32.00px;top:284.67px;font-size:12.5px;line-height:14px;transform:scaleX(0.8658);">Is price specific to</span>
<span id="l47" class="t" style="left:33.00px;top:296.67px;font-size:12.5px;line-height:14px;transform:scaleX(0.8428);">quantity ordered?</span>
<span id="l48" class="t" style="left:13.00px;top:316.67px;font-size:12.5px;line-height:14px;transform:scaleX(0.8550);">If Price related to class of</span>
<span id="l49" class="t" style="left:14.00px;top:329.67px;font-size:12.5px;line-height:14px;transform:scaleX(0.8408);">seller, specify:</span>
<span id="l50" class="t" style="left:154.00px;top:324.67px;font-size:12.5px;line-height:14px;transform:scaleX(0.8516);">Class does not affect the price</span>
<span id="l51" class="t" style="left:34.00px;top:347.67px;font-size:12.5px;line-height:14px;transform:scaleX(0.8728);">Date</span>
<span id="l52" class="t" style="left:100.00px;top:347.67px;font-size:12.5px;line-height:14px;transform:scaleX(0.8637);">Reported Price</span>
<span id="l53" class="t" style="left:242.00px;top:347.67px;font-size:12.5px;line-height:14px;transform:scaleX(0.8479);">Price Basis</span>
<span id="l54" class="t" style="left:422.00px;top:347.67px;font-size:12.5px;line-height:14px;transform:scaleX(0.8672);">Unit Priced</span>
<span id="l55" class="t" style="left:18.00px;top:364.67px;font-size:12.5px;line-height:14px;transform:scaleX(0.8732);">201111</span>
<span id="l56" class="t" style="left:85.00px;top:364.67px;font-size:12.5px;line-height:14px;transform:scaleX(0.8631);">9.3000</span>
<span id="l57" class="t" style="left:213.00px;top:364.67px;font-size:12.5px;line-height:14px;transform:scaleX(0.8382);">FOB FOREIGN PORT</span>
<span id="l58" class="t" style="left:415.00px;top:364.67px;font-size:12.5px;line-height:14px;transform:scaleX(0.8648);">KILOGRAM</span>
<span id="l59" class="t" style="left:14.00px;top:384.67px;font-size:12.5px;line-height:14px;transform:scaleX(0.8388);">Currency of Price</span>
<span id="l60" class="t" style="left:125.00px;top:388.67px;font-size:12.5px;line-height:14px;transform:scaleX(0.8745);">U.S. DOLLAR</span>
<span id="l61" class="t" style="left:299.00px;top:384.67px;font-size:12.5px;line-height:14px;transform:scaleX(0.8670);">Duty Amount:</span>
<span id="l62" class="t" style="left:14.00px;top:401.67px;font-size:12.5px;line-height:14px;transform:scaleX(0.8544);">Country from which</span>
<span id="l63" class="t" style="left:13.00px;top:414.67px;font-size:12.5px;line-height:14px;transform:scaleX(0.8660);">Item was Imported</span>
<span id="l64" class="t" style="left:127.00px;top:408.67px;font-size:12.5px;line-height:14px;transform:scaleX(0.8522);">CHINA PRC</span>
<span id="l65" class="t" style="left:505.00px;top:409.67px;font-size:12.5px;line-height:14px;transform:scaleX(0.8720);">No discounts</span>
<span id="l66" class="t" style="left:18.00px;top:166.67px;font-size:12.5px;line-height:14px;transform:scaleX(0.8487);">Disperse Dyes And Preparations Based Thereon; Disperse Blue 56; Purity - Textile Grade;</span>
<span id="l67" class="t" style="left:18.00px;top:179.67px;font-size:12.5px;line-height:14px;transform:scaleX(0.8516);">Dye Weight - Not Available; Chemical Composition - Not Available.</span>
<span id="l68" class="t" style="left:86.00px;top:130.67px;font-size:12.5px;line-height:14px;transform:scaleX(0.8604);color:#fff;">3204.11.1000</span>
<span id="l69" class="t" style="left:515.00px;top:111.67px;font-size:12.5px;line-height:14px;transform:scaleX(0.8466);color:#ACA899;">ZTHL0001</span>
<span id="l70" class="t" style="left:5.00px;top:28.52px;font-size:11.5px;line-height:13px;transform:scaleX(0.8673);-webkit-text-stroke:0.1px currentColor;">File</span>
<span id="l71" class="t" style="left:32.00px;top:28.52px;font-size:11.5px;line-height:13px;transform:scaleX(0.9612);-webkit-text-stroke:0.1px currentColor;">Edit</span>
<span id="l72" class="t" style="left:64.00px;top:28.52px;font-size:11.5px;line-height:13px;transform:scaleX(0.8496);-webkit-text-stroke:0.1px currentColor;">View</span>
<span id="l73" class="t" style="left:98.00px;top:28.52px;font-size:11.5px;line-height:13px;transform:scaleX(0.9334);-webkit-text-stroke:0.1px currentColor;">Options</span>
<span id="l74" class="t" style="left:147.00px;top:28.52px;font-size:11.5px;line-height:13px;transform:scaleX(0.9290);-webkit-text-stroke:0.1px currentColor;">Window</span>
<span id="l75" class="t" style="left:195.00px;top:28.52px;font-size:11.5px;line-height:13px;transform:scaleX(0.9321);-webkit-text-stroke:0.1px currentColor;">Help</span>
<span id="l76" class="t" style="left:21.80px;top:5.15px;font-size:14px;line-height:16px;transform:scaleX(0.8474);-webkit-text-stroke:0px currentColor;color:#fff;font-weight:bold;text-shadow:1px 1px 0 #0A1883;">IPPPRIMO</span>
<span id="l77" class="t" style="left:84.00px;top:5.15px;font-size:14px;line-height:16px;transform:scaleX(0.8344);-webkit-text-stroke:0px currentColor;color:#fff;font-weight:bold;text-shadow:1px 1px 0 #0A1883;">PRO</span>
<span id="l78" class="t" style="left:116.05px;top:5.15px;font-size:14px;line-height:16px;transform:scaleX(0.7920);-webkit-text-stroke:0px currentColor;color:#fff;font-weight:bold;text-shadow:1px 1px 0 #0A1883;">-</span>
<span id="l79" class="t" style="left:122.00px;top:5.15px;font-size:14px;line-height:16px;transform:scaleX(0.8902);-webkit-text-stroke:0px currentColor;color:#fff;font-weight:bold;text-shadow:1px 1px 0 #0A1883;">MURRAY_MYRON(</span>
<span id="l80" class="t" style="left:235.80px;top:5.15px;font-size:14px;line-height:16px;transform:scaleX(0.7985);-webkit-text-stroke:0px currentColor;color:#fff;font-weight:bold;text-shadow:1px 1px 0 #0A1883;">SR</span>
<span id="l81" class="t" style="left:256.00px;top:5.15px;font-size:14px;line-height:16px;transform:scaleX(0.8562);-webkit-text-stroke:0px currentColor;color:#fff;font-weight:bold;text-shadow:1px 1px 0 #0A1883;">-</span>
<span id="l82" class="t" style="left:266.00px;top:5.15px;font-size:14px;line-height:16px;transform:scaleX(0.8833);-webkit-text-stroke:0px currentColor;color:#fff;font-weight:bold;text-shadow:1px 1px 0 #0A1883;">9)</span>
<span id="l83" class="t" style="left:280.80px;top:5.15px;font-size:14px;line-height:16px;transform:scaleX(1.0168);-webkit-text-stroke:0px currentColor;color:#fff;font-weight:bold;text-shadow:1px 1px 0 #0A1883;">on</span>
<span id="l84" class="t" style="left:300.60px;top:5.15px;font-size:14px;line-height:16px;transform:scaleX(0.9382);-webkit-text-stroke:0px currentColor;color:#fff;font-weight:bold;text-shadow:1px 1px 0 #0A1883;">ippprod/austria</span>
<span id="l85" class="t" style="left:400.80px;top:5.15px;font-size:14px;line-height:16px;transform:scaleX(0.9418);-webkit-text-stroke:0px currentColor;color:#fff;font-weight:bold;text-shadow:1px 1px 0 #0A1883;">[</span>
<span id="l86" class="t" style="left:409.60px;top:5.15px;font-size:14px;line-height:16px;transform:scaleX(0.9252);-webkit-text-stroke:0px currentColor;color:#fff;font-weight:bold;text-shadow:1px 1px 0 #0A1883;">Connected]</span>
<span id="l87" class="t" style="left:26.80px;top:85.15px;font-size:14px;line-height:16px;transform:scaleX(1.0038);-webkit-text-stroke:0px currentColor;color:#fff;font-weight:bold;text-shadow:1px 1px 0 #0A1883;">B001475</span>
<span id="l88" class="t" style="left:94.00px;top:85.15px;font-size:14px;line-height:16px;transform:scaleX(0.8134);-webkit-text-stroke:0px currentColor;color:#fff;font-weight:bold;text-shadow:1px 1px 0 #0A1883;">-</span>
<span id="l89" class="t" style="left:99.80px;top:85.15px;font-size:14px;line-height:16px;transform:scaleX(0.8960);-webkit-text-stroke:0px currentColor;color:#fff;font-weight:bold;text-shadow:1px 1px 0 #0A1883;">Quote</span>
<span id="l90" class="t" style="left:140.80px;top:85.15px;font-size:14px;line-height:16px;transform:scaleX(0.9246);-webkit-text-stroke:0px currentColor;color:#fff;font-weight:bold;text-shadow:1px 1px 0 #0A1883;">01</span>
<span id="l91" class="t" style="left:162.10px;top:85.15px;font-size:14px;line-height:16px;transform:scaleX(0.8990);-webkit-text-stroke:0px currentColor;color:#fff;font-weight:bold;text-shadow:1px 1px 0 #0A1883;">-</span>
<span id="l92" class="t" style="left:170.00px;top:85.15px;font-size:14px;line-height:16px;transform:scaleX(0.7845);-webkit-text-stroke:0px currentColor;color:#fff;font-weight:bold;text-shadow:1px 1px 0 #0A1883;">CLASSIC</span>
<span id="l93" class="t" style="left:221.20px;top:85.15px;font-size:14px;line-height:16px;transform:scaleX(0.8630);-webkit-text-stroke:0px currentColor;color:#fff;font-weight:bold;text-shadow:1px 1px 0 #0A1883;">DYESTUFFS</span>
<span id="l94" class="t" style="left:297.60px;top:85.15px;font-size:14px;line-height:16px;transform:scaleX(0.8496);-webkit-text-stroke:0px currentColor;color:#fff;font-weight:bold;text-shadow:1px 1px 0 #0A1883;">INC</span>
<span id="l95" class="t" style="left:324.55px;top:85.15px;font-size:14px;line-height:16px;transform:scaleX(0.8776);-webkit-text-stroke:0px currentColor;color:#fff;font-weight:bold;text-shadow:1px 1px 0 #0A1883;">-</span>
<span id="l96" class="t" style="left:331.00px;top:85.15px;font-size:14px;line-height:16px;transform:scaleX(0.9561);-webkit-text-stroke:0px currentColor;color:#fff;font-weight:bold;text-shadow:1px 1px 0 #0A1883;">Item</span>
<span id="l97" class="t" style="left:362.20px;top:85.15px;font-size:14px;line-height:16px;transform:scaleX(0.9171);-webkit-text-stroke:0px currentColor;color:#fff;font-weight:bold;text-shadow:1px 1px 0 #0A1883;">Description</span>
<span id="l98" class="t" style="left:180.00px;top:112.67px;font-size:12.5px;line-height:14px;transform:scaleX(0.9107);color:#fff;font-weight:bold;-webkit-text-stroke:0.6px #fff;letter-spacing:0.5px;">IMPORT</span>
</body></html>
